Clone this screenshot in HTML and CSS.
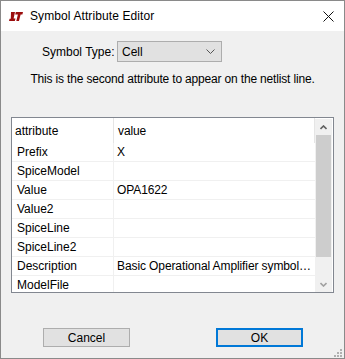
FILE: index.html
```html
<!DOCTYPE html>
<html>
<head>
<meta charset="utf-8">
<link rel="stylesheet" href="styles.css">
</head>
<body>
<div class="window">
  <div class="titlebar">
    <svg class="logo" width="14" height="9" viewBox="0 0 14 9">
      <polygon points="2,0 6,0 4.6,6.5 6.5,6.5 5.8,9 0,9 0.6,6.8 1.8,6.8" fill="#9b0d0d"/>
      <polygon points="6.8,0 14,0 13.4,2.4 11.6,2.4 10,9 7.3,9 8.9,2.4 6.2,2.4" fill="#9b0d0d"/>
    </svg>
    <span class="title">Symbol Attribute Editor</span>
    <svg class="close" width="11" height="11" viewBox="0 0 11 11">
      <path d="M0.5 0.5 L10.5 10.5 M10.5 0.5 L0.5 10.5" stroke="#111" stroke-width="1"/>
    </svg>
  </div>
  <div class="body">
    <div class="type-row">
      <span class="type-label">Symbol Type:</span>
      <div class="combo">
        <span>Cell</span>
        <svg class="chev" width="9" height="5" viewBox="0 0 9 5">
          <path d="M0.5 0.5 L4.5 4.5 L8.5 0.5" stroke="#555" stroke-width="1" fill="none"/>
        </svg>
      </div>
    </div>
    <p class="desc">This is the second attribute to appear on the netlist line.</p>
    <div class="table">
      <div class="grid">
        <div class="row head"><div class="c1">attribute</div><div class="c2">value</div></div>
        <div class="row"><div class="c1">Prefix</div><div class="c2">X</div></div>
        <div class="row"><div class="c1">SpiceModel</div><div class="c2"></div></div>
        <div class="row"><div class="c1">Value</div><div class="c2">OPA1622</div></div>
        <div class="row"><div class="c1">Value2</div><div class="c2"></div></div>
        <div class="row"><div class="c1">SpiceLine</div><div class="c2"></div></div>
        <div class="row"><div class="c1">SpiceLine2</div><div class="c2"></div></div>
        <div class="row"><div class="c1">Description</div><div class="c2">Basic Operational Amplifier symbol…</div></div>
        <div class="row"><div class="c1">ModelFile</div><div class="c2"></div></div>
      </div>
      <div class="scrollbar">
        <div class="sb-btn">
          <svg width="7" height="5" viewBox="0 0 7 5"><path d="M0.5 4 L3.5 1 L6.5 4" stroke="#606060" stroke-width="1.6" fill="none"/></svg>
        </div>
        <div class="sb-thumb"></div>
        <div class="sb-track"></div>
        <div class="sb-btn">
          <svg width="7" height="5" viewBox="0 0 7 5"><path d="M0.5 1 L3.5 4 L6.5 1" stroke="#a0a0a0" stroke-width="1.6" fill="none"/></svg>
        </div>
      </div>
    </div>
    <div class="buttons">
      <div class="btn">Cancel</div>
      <div class="btn default">OK</div>
    </div>
  </div>
  <svg class="grip" width="9" height="9" viewBox="0 0 9 9">
    <rect x="7" y="1" width="2" height="2" fill="#b0b0b0"/>
    <rect x="4" y="4" width="2" height="2" fill="#b0b0b0"/>
    <rect x="7" y="4" width="2" height="2" fill="#b0b0b0"/>
    <rect x="1" y="7" width="2" height="2" fill="#b0b0b0"/>
    <rect x="4" y="7" width="2" height="2" fill="#b0b0b0"/>
    <rect x="7" y="7" width="2" height="2" fill="#b0b0b0"/>
  </svg>
</div>
</body>
</html>
```
FILE: styles.css
```css
html, body {
  margin: 0;
  padding: 0;
  background: #f0f0f0;
}
.window {
  position: relative;
  width: 345px;
  height: 359px;
  box-sizing: border-box;
  border: 1px solid #8a8a8a;
  background: #f0f0f0;
  font-family: "Liberation Sans", Arial, sans-serif;
  font-size: 12px;
  color: #000;
  display: flex;
  flex-direction: column;
}
.titlebar {
  height: 30px;
  background: #fff;
  display: flex;
  align-items: center;
  flex: none;
}
.logo {
  margin-left: 8px;
  margin-right: 7px;
}
.title {
  font-size: 12px;
  letter-spacing: 0.1px;
  color: #000;
  flex: 1;
}
.close {
  margin-right: 10px;
}
.body {
  flex: 1;
  padding: 0 10px;
  display: flex;
  flex-direction: column;
}
.type-row {
  margin-top: 10px;
  height: 21px;
  display: flex;
  align-items: center;
  padding-left: 31px;
}
.type-label {
  width: 68px;
  margin-right: 7px;
  text-align: right;
  white-space: nowrap;
}
.combo {
  width: 105px;
  height: 21px;
  box-sizing: border-box;
  border: 1px solid #adadad;
  background: #e1e1e1;
  display: flex;
  align-items: center;
  justify-content: space-between;
  padding: 0 6px 0 4px;
}
.desc {
  margin: 10px 0 0;
  height: 14px;
  line-height: 14px;
  text-align: center;
  white-space: nowrap;
  letter-spacing: -0.17px;
}
.table {
  margin-top: 31px;
  height: 176px;
  box-sizing: border-box;
  border: 1px solid #828790;
  background: #fff;
  display: flex;
  padding-right: 1px;
}
.grid {
  flex: 1;
  overflow: hidden;
  display: flex;
  flex-direction: column;
}
.row {
  display: flex;
  height: 19px;
  box-sizing: border-box;
  border-bottom: 1px solid #f0f0f0;
  flex: none;
  align-items: center;
}
.row.head {
  height: 25px;
  border-bottom: none;
  border-right: 1px solid #e5e5e5;
}
.c1 {
  width: 102px;
  height: 100%;
  box-sizing: border-box;
  border-right: 1px solid #f0f0f0;
  padding-left: 5px;
  display: flex;
  align-items: center;
  white-space: nowrap;
}
.c2 {
  flex: 1;
  min-width: 0;
  padding-left: 3px;
  white-space: nowrap;
  letter-spacing: -0.1px;
}
.head .c1 {
  padding-left: 3px;
  border-right-color: #e5e5e5;
}
.head .c2 {
  padding-left: 4px;
}
.scrollbar {
  width: 17px;
  flex: none;
  display: flex;
  flex-direction: column;
  margin-top: 1px;
  background: #f0f0f0;
}
.sb-btn {
  height: 16px;
  display: flex;
  align-items: center;
  justify-content: center;
  flex: none;
}
.sb-thumb {
  height: 122px;
  margin: 0 1px;
  background: #cdcdcd;
  flex: none;
}
.sb-track {
  flex: 1;
}
.buttons {
  margin-top: 35px;
  display: flex;
  padding-left: 32px;
  gap: 86px;
}
.btn {
  width: 87px;
  height: 19px;
  box-sizing: border-box;
  border: 1px solid #adadad;
  background: #e1e1e1;
  display: flex;
  align-items: center;
  justify-content: center;
}
.btn.default {
  border: 2px solid #0078d7;
}
.grip {
  position: absolute;
  right: 2px;
  bottom: 1px;
}
```
